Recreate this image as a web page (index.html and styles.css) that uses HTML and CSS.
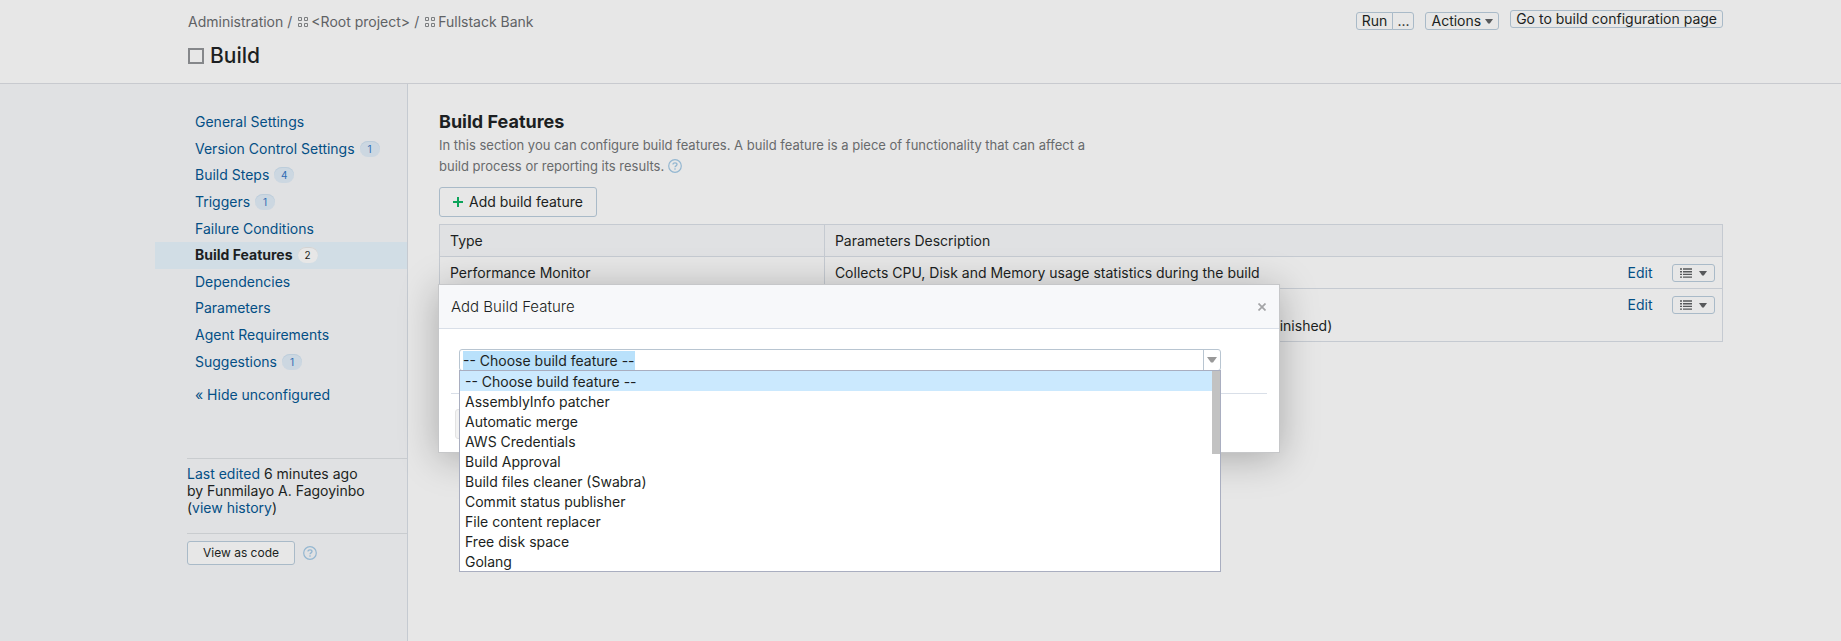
FILE: index.html
```html
<!DOCTYPE html>
<html lang="en">
<head>
<meta charset="utf-8">
<title>Build Features</title>
<link rel="stylesheet" href="styles.css">
</head>
<body>
<svg class="defs" aria-hidden="true">
  <symbol id="project" viewBox="0 0 11 11"><path d="M.5.5h3v3h-3zM6.5.5h3v3h-3zM.5 6.5h3v3h-3zM6.5 6.5h3v3h-3z" fill="none" stroke="currentColor"/></symbol>
  <symbol id="help" viewBox="0 0 14 14"><circle cx="7" cy="7" r="6.3" fill="none" stroke="currentColor" stroke-width="1.2"/><path d="M5 5.6C5 4.4 5.800 3.800 7 3.800s2 .7 2 1.700c0 1.400-2 1.300-2 2.800M7 9.300v1.400" fill="none" stroke="currentColor" stroke-width="1.300"/></symbol>
  <symbol id="caret" viewBox="0 0 8 5"><path d="M0 0h8L4.800 4.500H3.200z" fill="currentColor"/></symbol>
  <symbol id="list" viewBox="0 0 12 10"><path d="M0 1h2M3 1h9M0 3.700h2M3 3.700h9M0 6.400h2M3 6.400h9M0 9.100h2M3 9.100h9" stroke="currentColor" stroke-width="1.400"/></symbol>
</svg>
<header class="top">
  <div class="top-left">
    <nav class="crumbs" aria-label="Breadcrumb">
      <a href="#">Administration</a><span class="sep">/</span>
      <a href="#"><svg class="i-project"><use href="#project"/></svg>&lt;Root project&gt;</a><span class="sep">/</span>
      <a href="#"><svg class="i-project"><use href="#project"/></svg>Fullstack Bank</a>
    </nav>
    <h1 class="title"><span class="square"></span>Build</h1>
  </div>
  <div class="actions">
    <div class="split"><button class="btn" type="button">Run</button><button class="btn" type="button" aria-label="Run custom build">...</button></div>
    <button class="btn" type="button">Actions<svg class="i-caret"><use href="#caret"/></svg></button>
    <button class="btn btn-goto" type="button">Go to build configuration page</button>
  </div>
</header>
<div class="body">
  <aside class="side">
    <ul class="menu">
      <li><a href="#">General Settings</a></li>
      <li><a href="#">Version Control Settings</a><span class="badge">1</span></li>
      <li><a href="#">Build Steps</a><span class="badge">4</span></li>
      <li><a href="#">Triggers</a><span class="badge">1</span></li>
      <li><a href="#">Failure Conditions</a></li>
      <li class="current"><a href="#">Build Features</a><span class="badge">2</span></li>
      <li><a href="#">Dependencies</a></li>
      <li><a href="#">Parameters</a></li>
      <li><a href="#">Agent Requirements</a></li>
      <li><a href="#">Suggestions</a><span class="badge">1</span></li>
    </ul>
    <a class="hide" href="#">« Hide unconfigured</a>
    <p class="edited"><a href="#">Last edited</a> 6 minutes ago<br>by Funmilayo A. Fagoyinbo<br>(<a href="#">view history</a>)</p>
    <div class="code"><button class="btn btn-code" type="button">View as code</button><svg class="i-help"><use href="#help"/></svg></div>
  </aside>
  <main class="main">
    <h2 class="heading">Build Features</h2>
    <p class="desc">In this section you can configure build features. A build feature is a piece of functionality that can affect a build process or reporting its results. <svg class="i-help"><use href="#help"/></svg></p>
    <button class="btn btn-add" type="button"><svg class="i-plus" viewBox="0 0 10 10"><path d="M5 0v10M0 5h10" stroke="currentColor" stroke-width="2"/></svg>Add build feature</button>
    <table class="features">
      <thead><tr><th class="c-type">Type</th><th colspan="3">Parameters Description</th></tr></thead>
      <tbody>
        <tr><td>Performance Monitor</td><td>Collects CPU, Disk and Memory usage statistics during the build</td>
          <td class="c-edit"><a href="#">Edit</a></td><td class="c-menu"><button class="btn btn-menu" type="button" aria-label="More"><svg class="i-list"><use href="#list"/></svg><svg class="i-caret"><use href="#caret"/></svg></button></td></tr>
        <tr><td></td><td><br>Publish the commit status on any event (build started, interrupted, finished)</td>
          <td class="c-edit"><a href="#">Edit</a></td><td class="c-menu"><button class="btn btn-menu" type="button" aria-label="More"><svg class="i-list"><use href="#list"/></svg><svg class="i-caret"><use href="#caret"/></svg></button></td></tr>
      </tbody>
    </table>
  </main>
</div>
<section class="dialog" role="dialog" aria-labelledby="dialog-title">
  <div class="dialog-head"><h3 id="dialog-title">Add Build Feature</h3>
    <button class="close" type="button" aria-label="Close"><svg viewBox="0 0 8 8"><path d="M.5.5l7 7M7.500.5l-7 7" stroke="currentColor" stroke-width="1.700"/></svg></button></div>
  <div class="dialog-body">
    <div class="combo">
      <input class="combo-input" id="feature" type="text" role="combobox" aria-label="Build feature" aria-expanded="true" aria-controls="options" value="-- Choose build feature --">
      <button class="combo-toggle" type="button" aria-label="Show options"><svg viewBox="0 0 10 6"><path d="M0 0h10L6 5.500H4z" fill="currentColor"/></svg></button>
      <div class="popup">
        <ul class="options" id="options" role="listbox">
          <li role="option" aria-selected="true">-- Choose build feature --</li>
          <li role="option">AssemblyInfo patcher</li>
          <li role="option">Automatic merge</li>
          <li role="option">AWS Credentials</li>
          <li role="option">Build Approval</li>
          <li role="option">Build files cleaner (Swabra)</li>
          <li role="option">Commit status publisher</li>
          <li role="option">File content replacer</li>
          <li role="option">Free disk space</li>
          <li role="option">Golang</li>
        </ul>
        <span class="thumb"></span>
      </div>
    </div>
  </div>
  <div class="dialog-foot"><button class="btn btn-save" type="button" aria-label="Save" disabled></button></div>
</section>
<script src="combo.js"></script>
</body>
</html>
```
FILE: styles.css
```css
* { box-sizing: border-box; }
body {
  margin: 0;
  min-height: 100vh;
  display: flex;
  flex-direction: column;
  background: #e7e7e7;
  color: #1c1f22;
  font: 14px/20px Inter, "Liberation Sans", sans-serif;
}
a { color: #044f85; text-decoration: none; }
h1, h2, h3, p, ul { margin: 0; padding: 0; }
ul { list-style: none; }
svg { flex: none; }
.defs { position: absolute; width: 0; height: 0; }
.i-project { width: 11px; height: 11px; margin-right: 2px; color: #7c7e80; }
.i-caret { width: 8px; height: 5px; color: #57595b; }
.i-list { width: 12px; height: 10px; color: #57595b; }
.i-help { width: 14px; height: 14px; color: #94b7d1; }

.btn {
  display: inline-flex;
  align-items: center;
  justify-content: center;
  height: 18px;
  padding: 0 5px;
  gap: 4px;
  border: 1px solid #a9bac8;
  border-radius: 3px;
  background: #e7e7e7;
  color: #1c1f22;
  font: inherit;
  line-height: 16px;
  white-space: nowrap;
}

.top {
  display: flex;
  justify-content: space-between;
  align-items: flex-start;
  height: 84px;
  padding: 10px 118px 0 188px;
  border-bottom: 1px solid #c8cacf;
}
.crumbs { display: flex; padding-top: 2px; }
.crumbs a { display: flex; align-items: center; color: #5f6265; }
.sep { margin: 0 6px 0 4px; color: #5f6265; }
.title {
  display: flex;
  align-items: center;
  gap: 6px;
  margin-top: 10px;
  font-size: 21px;
  font-weight: 500;
  line-height: 27px;
}
.square { width: 16px; height: 16px; border: 2px solid #85878a; }
.actions { display: flex; align-items: flex-start; gap: 11px; }
.actions .btn { margin-top: 2px; }
.actions .btn-goto { margin-top: 0; }
.split { display: flex; }
.split .btn:first-child { border-radius: 3px 0 0 3px; }
.split .btn:last-child { margin-left: -1px; padding: 0 4px; border-radius: 0 3px 3px 0; }

.body { flex: 1; display: flex; }
.side {
  width: 408px;
  flex: none;
  padding: 25px 0 0 155px;
  background: #e0e1e3;
  border-right: 1px solid #c5cad1;
}
.menu { display: grid; grid-template-rows: repeat(10, 1fr); height: 266px; }
.menu li { display: flex; align-items: center; gap: 5px; padding-left: 40px; }
.menu .current { background: #d1dde5; }
.current a { color: #1c1f22; font-weight: 700; }
.badge {
  width: 20px;
  border-radius: 8px;
  background: #ccd7e1;
  box-shadow: inset 0 1px 0 #bccddb;
  color: #2f6cb3;
  font-size: 10px;
  line-height: 16px;
  text-align: center;
}
.current .badge { background: #e7e7e7; box-shadow: inset 0 1px 0 #d3d3d3; color: #1c1f22; }
.hide { display: block; margin: 10px 0 0 40px; }
.edited {
  margin: 53px 0 0 32px;
  padding: 6px 0 17px;
  border-top: 1px solid #c9cccf;
  border-bottom: 1px solid #c9cccf;
  line-height: 17px;
}
.code { display: flex; align-items: center; gap: 8px; margin: 7px 0 0 32px; }
.btn-code { height: 24px; padding: 0 15px; font-size: 12px; }

.main { flex: 1; min-width: 0; padding: 25px 118px 0 31px; }
.heading { font-size: 18px; font-weight: 700; line-height: 26px; }
.desc { max-width: 660px; color: #686a6c; font-size: 13px; line-height: 21px; }
.desc .i-help { vertical-align: -2px; }
.btn-add { height: 30px; margin: 10px 0 7px; padding: 0 13px; gap: 6px; }
.i-plus { width: 10px; height: 10px; color: #0ca35a; }
.features { width: 100%; border-collapse: collapse; border: 1px solid #c5cad1; }
.features th, .features td { padding: 5px 10px; text-align: left; vertical-align: top; line-height: 21px; }
.features th { background: #e0e1e3; font-weight: 400; }
.features tr { border-bottom: 1px solid #c5cad1; }
.c-type { width: 30%; border-right: 1px solid #c5cad1; }
.features td:first-child { border-right: 1px solid #c5cad1; }
.features .c-edit { width: 35px; padding-left: 0; padding-right: 0; }
.features .c-menu { width: 60px; padding: 7px 7px 0 0; text-align: right; line-height: 18px; }
.btn-menu { width: 43px; gap: 7px; vertical-align: top; }

.dialog {
  position: absolute;
  left: 438px;
  top: 284px;
  width: 842px;
  background: #fff;
  border: 1px solid #c6c7c9;
  box-shadow: 0 5px 36px rgba(0, 0, 0, .27);
}
.dialog-head {
  display: flex;
  align-items: center;
  justify-content: space-between;
  height: 44px;
  padding: 0 13px 0 12px;
  background: #f7f8fa;
  border-bottom: 1px solid #d9dfe8;
}
.dialog-head h3 { color: #1c1f22; font-size: 15px; font-weight: 300; }
.close { display: flex; padding: 0; border: 0; background: none; color: #a3a4a6; }
.close svg { width: 8px; height: 8px; }
.dialog-body { margin: 0 12px; padding: 20px 46px 22px 8px; border-bottom: 1px solid #d9dfe8; }
.combo { position: relative; display: flex; height: 22px; border: 1px solid #b8c5d1; border-radius: 3px; }
.combo-input {
  flex: 1;
  min-width: 0;
  padding: 2px 3px 0;
  border: 0;
  outline: 0;
  background: none;
  color: #1c1f22;
  font: inherit;
  caret-color: transparent;
}
.combo-input::selection { background: #b9e1fb; color: #1c1f22; }
.combo-toggle {
  display: flex;
  align-items: center;
  justify-content: center;
  width: 17px;
  padding: 0;
  border: 0;
  border-left: 1px solid #b8c5d1;
  background: none;
  color: #999;
}
.combo-toggle svg { width: 10px; height: 6px; }
.popup {
  position: absolute;
  z-index: 1;
  top: 20px;
  left: -1px;
  right: -1px;
  display: flex;
  align-items: flex-start;
  background: #fff;
  border: 1px solid #a9aec0;
}
.options { flex: 1; }
.options li { padding: 2px 0 0 5px; line-height: 18px; }
.options [aria-selected="true"] { background: #cbe9fe; }
.thumb { width: 8px; height: 83px; background: #c2c2c2; }
.dialog-foot { display: flex; padding: 15px 16px 13px; }
.btn-save { width: 64px; height: 30px; background: #f3f3f3; border-color: #e3e3e3; }
```
FILE: combo.js
```js
const input = document.getElementById('feature');
input.focus();
input.select();
```
